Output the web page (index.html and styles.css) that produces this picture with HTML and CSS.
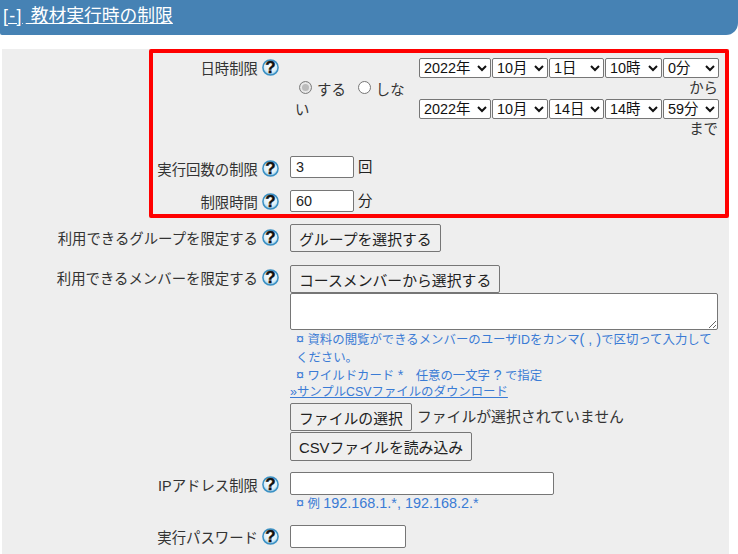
FILE: index.html
```html
<!DOCTYPE html>
<html lang="ja">
<head>
  <meta charset="UTF-8">
  <title>教材実行時の制限</title>
  <link rel="stylesheet" href="styles.css">
</head>
<body>

<svg class="icon-defs" width="0" height="0">
  <defs>
    <radialGradient id="helpFill" cx="50%" cy="40%" r="60%">
      <stop offset="0%" stop-color="#ffffff"/>
      <stop offset="65%" stop-color="#dff0f8"/>
      <stop offset="100%" stop-color="#8cc8e6"/>
    </radialGradient>
  </defs>
  <symbol id="help" viewBox="0 0 17 17">
    <circle cx="8.5" cy="8.5" r="7.6" fill="url(#helpFill)" stroke="#3a90c4" stroke-width="1.5"/>
    <text x="8.5" y="14.4" text-anchor="middle" class="help-mark">?</text>
  </symbol>
</svg>

<h2 class="section-title"><a href="#"><span class="toggle">[-]</span> 教材実行時の制限</a></h2>

<form class="panel">
  <!-- Highlighted rows -->
  <div class="highlight">
    <div class="row row-date">
      <div class="row-label">日時制限 <svg class="help"><use href="#help"/></svg></div>
      <div class="date-field">
        <div class="radio-group">
          <input type="radio" name="limit" checked> する
          <input type="radio" name="limit"> しない
        </div>
        <div class="date-range">
          <div class="date-selects">
            <select class="sel-year"><option>2022年</option></select>
            <select class="sel-month"><option>10月</option></select>
            <select class="sel-day"><option>1日</option></select>
            <select class="sel-hour"><option>10時</option></select>
            <select class="sel-min"><option>0分</option></select>
          </div>
          <div class="date-suffix">から</div>
          <div class="date-selects">
            <select class="sel-year"><option>2022年</option></select>
            <select class="sel-month"><option>10月</option></select>
            <select class="sel-day"><option>14日</option></select>
            <select class="sel-hour"><option>14時</option></select>
            <select class="sel-min"><option>59分</option></select>
          </div>
          <div class="date-suffix">まで</div>
        </div>
      </div>
    </div>
    <div class="row row-count">
      <div class="row-label">実行回数の制限 <svg class="help"><use href="#help"/></svg></div>
      <div class="inline-field"><input type="text" class="input-short" value="3"> 回</div>
    </div>
    <div class="row row-time">
      <div class="row-label">制限時間 <svg class="help"><use href="#help"/></svg></div>
      <div class="inline-field"><input type="text" class="input-short" value="60"> 分</div>
    </div>
  </div>

  <div class="row row-group">
    <div class="row-label">利用できるグループを限定する <svg class="help"><use href="#help"/></svg></div>
    <div><button type="button">グループを選択する</button></div>
  </div>

  <div class="row row-member">
    <div class="row-label">利用できるメンバーを限定する <svg class="help"><use href="#help"/></svg></div>
    <div class="member-field">
      <button type="button">コースメンバーから選択する</button>
      <textarea></textarea>
      <p class="note"><span class="note-latin">¤</span> 資料の閲覧ができるメンバーのユーザIDをカンマ<span class="note-latin">( , )</span>で区切って入力してください。</p>
      <p class="note"><span class="note-latin">¤</span> ワイルドカード <span class="note-latin">*</span>　任意の一文字 <span class="note-latin">?</span> で指定</p>
      <a class="sample-link" href="#">»サンプルCSVファイルのダウンロード</a>
      <div class="file-line"><button type="button">ファイルの選択</button> ファイルが選択されていません</div>
      <button type="button">CSVファイルを読み込み</button>
    </div>
  </div>

  <div class="row row-ip">
    <div class="row-label">IPアドレス制限 <svg class="help"><use href="#help"/></svg></div>
    <div>
      <input type="text" class="input-ip">
      <p class="note"><span class="note-latin">¤</span> 例 <span class="note-latin">192.168.1.*, 192.168.2.*</span></p>
    </div>
  </div>

  <div class="row row-pass">
    <div class="row-label">実行パスワード <svg class="help"><use href="#help"/></svg></div>
    <div><input type="text" class="input-pass"></div>
  </div>
</form>

</body>
</html>
```

FILE: styles.css
```css
/* General Styles */
html, body {
  height: 554px;
  overflow: hidden;
}

body {
  margin: 0;
  background-color: #fff;
  color: #333;
  font-family: 'Liberation Sans', 'Noto Sans CJK JP', sans-serif;
  font-size: 14.4px;
  line-height: 20px;
}

.icon-defs {
  position: absolute;
}

.help-mark {
  font-family: 'Liberation Sans', sans-serif;
  font-size: 17px;
  font-weight: bold;
  fill: #111;
  stroke: #111;
  stroke-width: 0.4px;
}

/* Section title */
.section-title {
  margin: 0 0 14px 0;
  height: 35px;
  padding-left: 3px;
  background-color: #4682b4;
  border-radius: 0 0 12px 2px;
  font-size: 17.8px;
  font-weight: normal;
  line-height: 33px;
}

.section-title a {
  color: #fff;
}

.toggle {
  letter-spacing: 1.3px;
  margin-right: 3px;
}

/* Panel */
.panel {
  margin: 0 9px 0 2px;
  height: 505px;
  background-color: #eee;
}

.highlight {
  margin-left: 147px;
  height: 169px;
  box-sizing: border-box;
  border: 4px solid #f00;
  border-radius: 2px;
}

.row {
  display: flex;
  align-items: flex-start;
}

.row-label {
  flex: none;
  width: 277px;
  padding-right: 11px;
  text-align: right;
  white-space: nowrap;
}

.highlight .row-label {
  width: 126px;
}

.help {
  width: 17px;
  height: 17px;
  vertical-align: -2px;
}

/* Date row */
.row-date {
  box-sizing: border-box;
  height: 97px;
  padding-top: 5px;
}

.row-date .row-label {
  margin-top: 1px;
}

.date-field {
  display: flex;
}

.radio-group {
  width: 110px;
  margin: 0 14px 0 5px;
  padding-top: 22px;
  text-indent: 4px;
}

.radio-group input {
  appearance: none;
  box-sizing: border-box;
  width: 13px;
  height: 13px;
  margin: 0 1px 0 0;
  background-color: #fff;
  border: 1px solid #767676;
  border-radius: 50%;
  vertical-align: 1px;
}

.radio-group input + input {
  margin-left: 8px;
}

.radio-group input:checked {
  background-color: #bbb;
  border-color: #808080;
  box-shadow: inset 0 0 0 2px #e8e8e8;
}

.date-selects {
  display: flex;
  gap: 1px;
}

.date-suffix {
  height: 21px;
  padding-right: 1px;
  text-align: right;
  line-height: 21px;
}

select {
  height: 20px;
  padding: 0;
  background-color: #fff;
  border: 1px solid #767676;
  border-radius: 2px;
  color: #111;
  font-family: inherit;
  font-size: 14.4px;
}

.sel-year { width: 72px; }
.sel-month { width: 56px; }
.sel-day { width: 55px; }
.sel-hour { width: 57px; }
.sel-min { width: 56px; }

/* Inputs */
input[type="text"], textarea {
  box-sizing: border-box;
  background-color: #fff;
  border: 1px solid #767676;
  border-radius: 2px;
  color: #222;
  font-family: inherit;
  font-size: 14.4px;
  padding: 1px 5px;
  margin: 0;
}

.input-short {
  width: 64px;
  height: 22px;
}

.inline-field {
  color: #222;
}

.row-count {
  box-sizing: border-box;
  height: 34px;
  padding-top: 6px;
}

.row-count .row-label {
  margin-top: 4px;
}

.row-time {
  box-sizing: border-box;
  height: 30px;
  padding-top: 6px;
}

.row-time .row-label {
  margin-top: 3px;
}

/* Buttons */
button {
  box-sizing: border-box;
  height: 28px;
  padding: 0 8px;
  background-color: #efefef;
  border: 1px solid #767676;
  border-radius: 2px;
  color: #222;
  font-family: inherit;
  font-size: 14.85px;
}

.row-group {
  box-sizing: border-box;
  height: 47px;
  padding-top: 6px;
}

.row-group .row-label {
  margin-top: 5px;
}

.row-member .row-label {
  margin-top: 4px;
}

.member-field {
  width: 428px;
}

.member-field button {
  display: block;
  flex: none;
}

textarea {
  display: block;
  width: 428px;
  height: 37px;
  margin-bottom: 1px;
}

.note {
  margin: 0;
  padding-left: 6px;
  color: #3a7bd5;
  font-size: 12.4px;
  line-height: 18px;
}

.note-latin {
  font-size: 14.4px;
  line-height: 17px;
}

.sample-link {
  display: block;
  color: #3a7bd5;
  font-size: 12.4px;
  line-height: 17px;
  margin-top: -1px;
  margin-bottom: 2px;
}

.file-line {
  display: flex;
  gap: 5px;
  align-items: flex-start;
  height: 29px;
  font-size: 14.85px;
  line-height: 29px;
}

.member-field .file-line + button {
  height: 29px;
}

.row-ip {
  margin-top: 11px;
}

.row-ip .row-label {
  margin-top: 4px;
}

.input-ip {
  display: block;
  width: 264px;
  height: 23px;
}

.row-pass {
  margin-top: 12px;
}

.row-pass .row-label {
  margin-top: 3px;
}

.input-pass {
  width: 116px;
  height: 23px;
}
```
